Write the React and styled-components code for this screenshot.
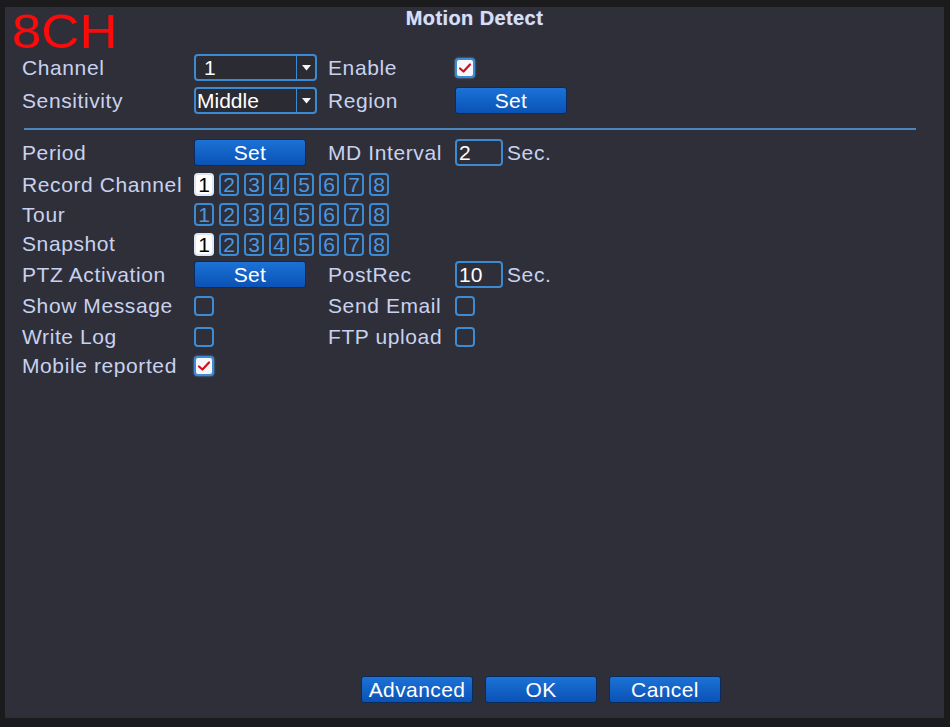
import React from 'react'
import styled, { createGlobalStyle } from 'styled-components'

const GlobalStyle = createGlobalStyle`
  html, body {
    margin: 0;
    padding: 0;
    background: #1b1b1d;
  }
  body {
    width: 950px;
    height: 727px;
    overflow: hidden;
    font-family: "Liberation Sans", Arial, sans-serif;
  }
`

const channels = [1, 2, 3, 4, 5, 6, 7, 8]

const Check = ({ checked }) => (
  <CheckBox $checked={checked}>
    {checked && (
      <svg width="14" height="12" viewBox="0 0 14 12">
        <path d="M2 6.5 L5.5 9.5 L12 2.5" fill="none" stroke="#d0101e" strokeWidth="2.2" strokeLinecap="round" strokeLinejoin="round" />
      </svg>
    )}
  </CheckBox>
)

const Select = ({ value, $indent }) => (
  <SelectBox>
    <SelectValue $indent={$indent}>{value}</SelectValue>
    <SelectArrow>
      <svg width="9" height="6" viewBox="0 0 9 6">
        <path d="M0 0 L9 0 L4.5 5.5 Z" fill="#f4f6fb" />
      </svg>
    </SelectArrow>
  </SelectBox>
)

const ChipRow = ({ selected }) => (
  <Chips>
    {channels.map((n) => (
      <Chip key={n} $on={selected.includes(n)}>{n}</Chip>
    ))}
  </Chips>
)

const App = () => {
  return (
    <>
      <GlobalStyle />
      <Panel>
        <Watermark>8CH</Watermark>
        <Title>Motion Detect</Title>

        <Form>
          <Row $h={33}>
            <Label>Channel</Label>
            <Select value="1" $indent={8} />
            <Label>Enable</Label>
            <Check checked />
          </Row>
          <Row $h={33}>
            <Label>Sensitivity</Label>
            <Select value="Middle" $indent={1} />
            <Label>Region</Label>
            <Button>Set</Button>
          </Row>

          <Divider />

          <Row $h={33}>
            <Label>Period</Label>
            <Button>Set</Button>
            <Label>MD Interval</Label>
            <Field>
              <Input>2</Input>
              <Unit>Sec.</Unit>
            </Field>
          </Row>
          <Row $h={31}>
            <Label>Record Channel</Label>
            <ChipRow selected={[1]} />
          </Row>
          <Row $h={29}>
            <Label>Tour</Label>
            <ChipRow selected={[]} />
          </Row>
          <Row $h={30}>
            <Label>Snapshot</Label>
            <ChipRow selected={[1]} />
          </Row>
          <Row $h={31}>
            <Label>PTZ Activation</Label>
            <Button>Set</Button>
            <Label>PostRec</Label>
            <Field>
              <Input>10</Input>
              <Unit>Sec.</Unit>
            </Field>
          </Row>
          <Row $h={32}>
            <Label>Show Message</Label>
            <Check />
            <Label>Send Email</Label>
            <Check />
          </Row>
          <Row $h={29}>
            <Label>Write Log</Label>
            <Check />
            <Label>FTP upload</Label>
            <Check />
          </Row>
          <Row $h={29}>
            <Label>Mobile reported</Label>
            <Check checked />
          </Row>
        </Form>

        <Footer>
          <Button>Advanced</Button>
          <Button>OK</Button>
          <Button>Cancel</Button>
        </Footer>
      </Panel>
    </>
  )
}

const Panel = styled.div`
  position: relative;
  box-sizing: border-box;
  margin: 7px 0 0 5px;
  width: 939px;
  height: 711px;
  background: #2f2f39;
  padding: 0 17px 15px;
  display: flex;
  flex-direction: column;
`

const Watermark = styled.div`
  position: absolute;
  left: 7px;
  top: 5px;
  font-size: 48px;
  line-height: 40px;
  color: #ff0a0a;
  transform: scaleX(1.1);
  transform-origin: left center;
`

const Title = styled.div`
  height: 22px;
  line-height: 22px;
  text-align: center;
  font-size: 20px;
  font-weight: bold;
  color: #d6def4;
  letter-spacing: 0.4px;
  text-shadow: 0 0 1px #8a96c0;
  margin-bottom: 22px;
`

const Form = styled.div`
  display: flex;
  flex-direction: column;
`

const Row = styled.div`
  display: grid;
  grid-template-columns: 172px 134px 127px auto;
  align-items: center;
  height: ${(p) => p.$h}px;
`

const Label = styled.div`
  font-size: 21px;
  color: #c8d2ee;
  letter-spacing: 0.6px;
  white-space: nowrap;
`

const Divider = styled.div`
  height: 2px;
  margin: 11px 11px 6px 2px;
  background: #4a86bf;
`

const SelectBox = styled.div`
  box-sizing: border-box;
  width: 123px;
  height: 27px;
  border: 2px solid #3c8ad2;
  border-radius: 4px;
  display: flex;
  align-items: stretch;
  background: #2b2b33;
`

const SelectValue = styled.div`
  flex: 1;
  padding-left: ${(p) => p.$indent}px;
  font-size: 21px;
  line-height: 23px;
  color: #ffffff;
`

const SelectArrow = styled.div`
  width: 18px;
  border-left: 1px solid #3c8ad2;
  display: flex;
  align-items: center;
  justify-content: center;
`

const CheckBox = styled.div`
  box-sizing: border-box;
  width: 20px;
  height: 20px;
  border: 2px solid #3d8bd3;
  border-radius: 4px;
  background: ${(p) => (p.$checked ? '#f6f7fb' : 'transparent')};
  box-shadow: ${(p) => (p.$checked ? '0 0 2px #6aaae8' : 'none')};
  display: flex;
  align-items: center;
  justify-content: center;
`

const Button = styled.div`
  box-sizing: border-box;
  width: 112px;
  height: 27px;
  border: 1px solid #0b2c5a;
  border-radius: 3px;
  background: linear-gradient(#1c72d6, #0a52b6);
  color: #ffffff;
  font-size: 21px;
  line-height: 25px;
  text-align: center;
  letter-spacing: 0.4px;
`

const Field = styled.div`
  display: flex;
  align-items: center;
  gap: 4px;
`

const Input = styled.div`
  box-sizing: border-box;
  width: 48px;
  height: 27px;
  border: 2px solid #3c8ad2;
  border-radius: 4px;
  padding-left: 2px;
  font-size: 21px;
  line-height: 23px;
  color: #ffffff;
`

const Unit = styled.div`
  font-size: 21px;
  color: #c8d2ee;
  letter-spacing: 0.6px;
`

const Chips = styled.div`
  grid-column: 2 / span 3;
  display: flex;
  gap: 5px;
`

const Chip = styled.div`
  box-sizing: border-box;
  width: 20px;
  height: 23px;
  border: 2px solid ${(p) => (p.$on ? '#dfe6f4' : '#3b8ad4')};
  border-radius: 4px;
  background: ${(p) => (p.$on ? '#ffffff' : 'transparent')};
  color: ${(p) => (p.$on ? '#000000' : '#4a98e2')};
  font-size: 21px;
  line-height: 19px;
  text-align: center;
`

const Footer = styled.div`
  margin-top: auto;
  padding-left: 339px;
  display: flex;
  gap: 12px;
`

export default App
